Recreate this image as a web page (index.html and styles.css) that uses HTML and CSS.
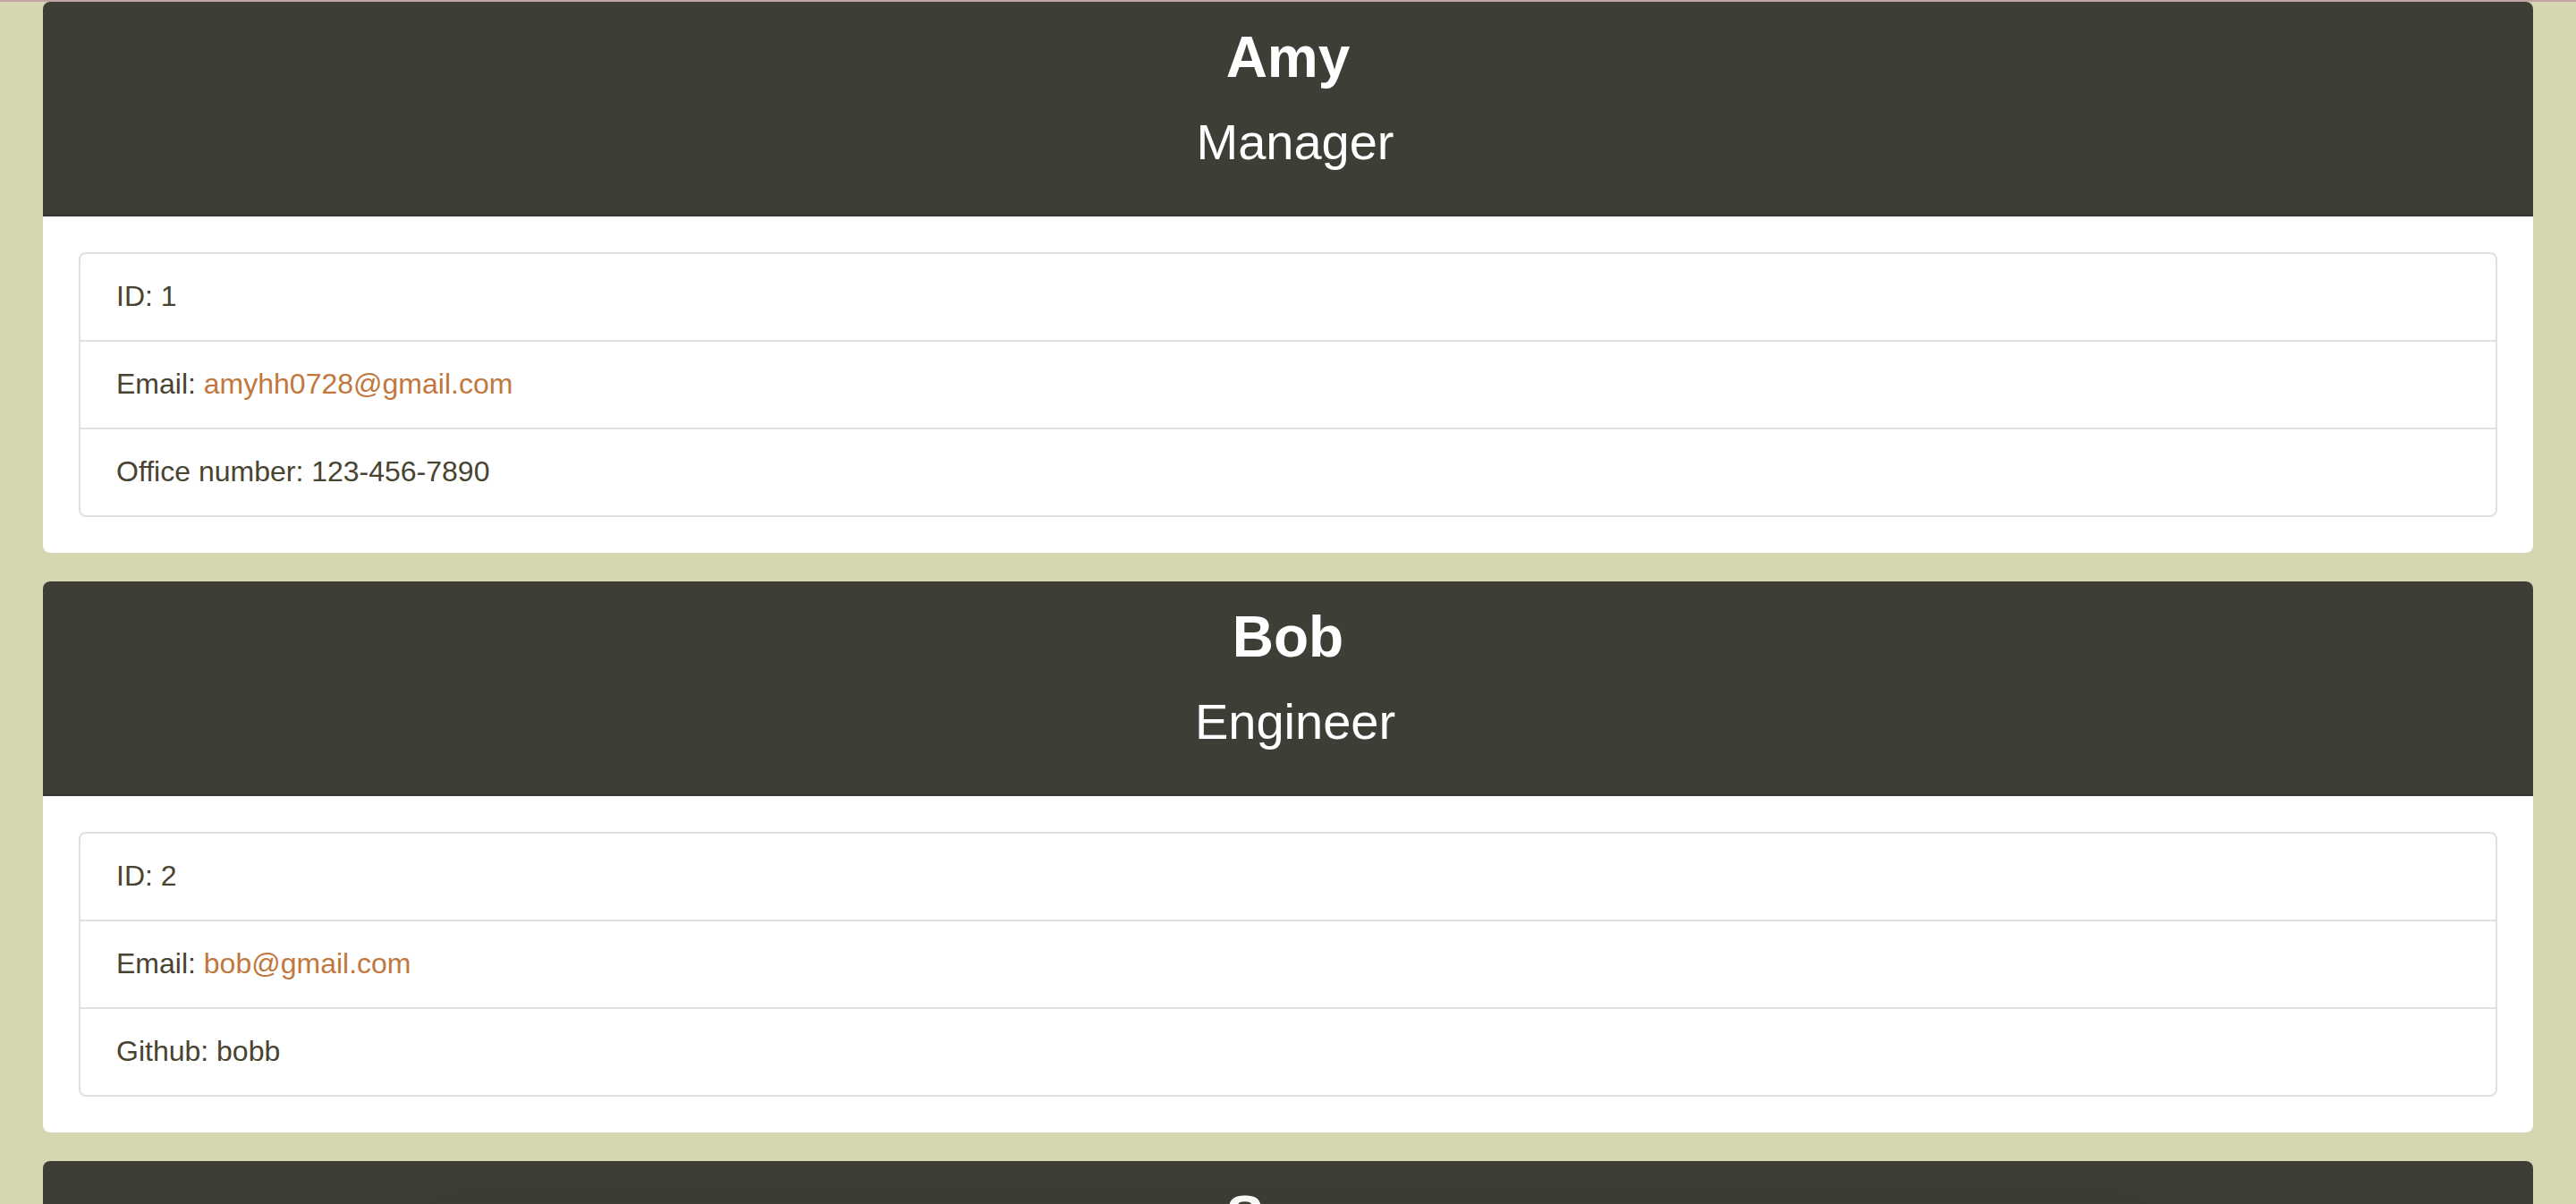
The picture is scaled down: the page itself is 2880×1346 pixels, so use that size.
FILE: index.html
```html
<!DOCTYPE html>
<html lang="en">
<head>
  <meta charset="utf-8">
  <meta name="viewport" content="width=device-width, initial-scale=1">
  <title>My Team</title>
  <link rel="stylesheet" href="styles.css">
</head>
<body>
  <main class="team">
    <article class="card">
      <header class="card-header">
        <h2 class="card-name">Amy</h2>
        <h3 class="card-role"><span class="role-icon"></span>Manager</h3>
      </header>
      <div class="card-body">
        <ul class="list-group">
          <li class="list-item">ID: 1</li>
          <li class="list-item">Email: <a href="mailto:amyhh0728@gmail.com">amyhh0728@gmail.com</a></li>
          <li class="list-item">Office number: 123-456-7890</li>
        </ul>
      </div>
    </article>
    <article class="card">
      <header class="card-header">
        <h2 class="card-name">Bob</h2>
        <h3 class="card-role"><span class="role-icon"></span>Engineer</h3>
      </header>
      <div class="card-body">
        <ul class="list-group">
          <li class="list-item">ID: 2</li>
          <li class="list-item">Email: <a href="mailto:bob@gmail.com">bob@gmail.com</a></li>
          <li class="list-item">Github: bobb</li>
        </ul>
      </div>
    </article>
    <article class="card">
      <header class="card-header">
        <h2 class="card-name">Sara</h2>
      </header>
    </article>
  </main>
  <div class="bottom-shade"></div>
</body>
</html>
```
FILE: styles.css
```css
* {
  box-sizing: border-box;
}

body {
  margin: 0;
  height: 100vh;
  overflow: hidden;
  background: #d6d6b1;
  color: #494331;
  font-family: "Helvetica Neue", Helvetica, "Liberation Sans", Arial, sans-serif;
  font-size: 32px;
  line-height: 46px;
}

.team {
  display: flex;
  flex-direction: column;
  gap: 32px;
  padding: 0 48px;
  border-top: 2px solid #c4a5a3;
}

.card {
  flex: none;
  overflow: hidden;
  background: #fff;
  border-radius: 8px;
}

.card-header {
  padding: 24px 40px;
  background: #3f3e36;
  border-bottom: 2px solid #353530;
  color: #fff;
  text-align: center;
}

.card-name {
  margin: 0 0 16px;
  font-size: 64px;
  line-height: 76px;
  font-weight: 700;
}

.card-role {
  margin: 0 0 16px;
  font-size: 56px;
  line-height: 82px;
  font-weight: 400;
}

.role-icon {
  margin-right: 16px;
}

.card-body {
  padding: 40px;
}

.list-group {
  margin: 0;
  padding: 0;
  list-style: none;
  border: 2px solid #dfdfdf;
  border-radius: 8px;
}

.list-item {
  padding: 24px 40px 26px;
}

.list-item + .list-item {
  border-top: 2px solid #dfdfdf;
}

.list-item a {
  color: #c1773e;
  text-decoration: none;
}

/* Soft darkening along the bottom edge of the window */
.bottom-shade {
  position: fixed;
  right: 17%;
  bottom: 0;
  left: 17%;
  height: 1px;
  box-shadow: 0 24px 60px 16px rgba(0, 0, 0, 0.12);
  pointer-events: none;
}
```
